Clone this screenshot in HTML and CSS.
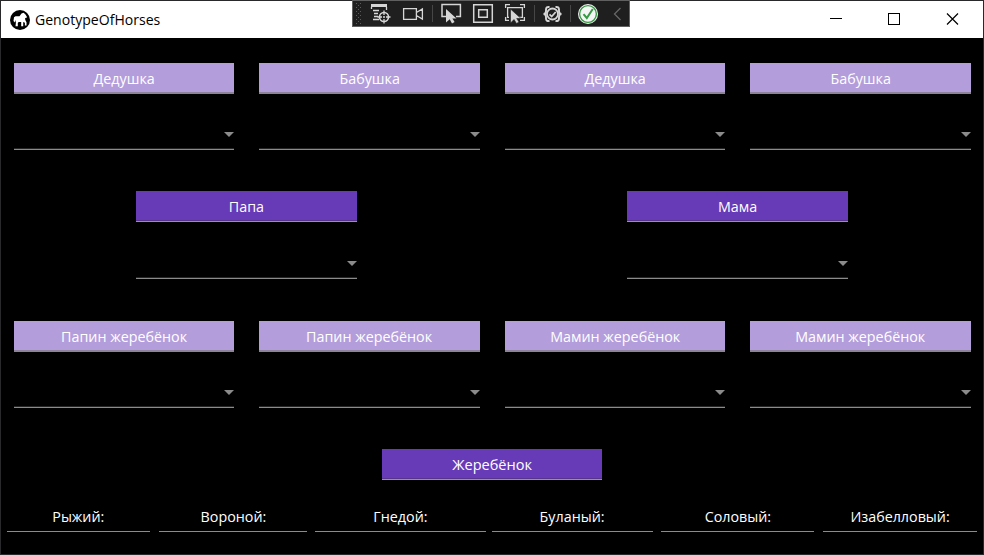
FILE: index.html
```html
<!DOCTYPE html>
<html lang="ru">
<head>
<meta charset="utf-8">
<title>GenotypeOfHorses</title>
<link rel="stylesheet" href="styles.css">
</head>
<body>
<div class="window">
  <header class="titlebar">
    <svg class="logo" width="20" height="20" viewBox="0 0 20 20"><circle cx="10" cy="10" r="10" fill="#000"/><path d="M3.500 11 L4 7.200 L5.500 6.200 H9.500 L11.500 3.600 L13.600 2.800 L15.500 4.500 L17 7 L16 8.200 L15 7.800 L15.300 10 L16.500 12.300 V15.500 H14.900 V12.800 L13.200 12 V16.300 H11.200 V12 H8.600 L7.800 13 V16.300 H5.500 L5.900 12.500 L5.200 10 L4.700 12.500 Z" fill="#fff"/></svg>
    <h1 class="title">GenotypeOfHorses</h1>
    <svg class="controls" width="138" height="37" viewBox="0 0 138 37" fill="none" stroke="#000" shape-rendering="crispEdges"><path d="M15 17.500H27M73.500 12.500H84.500V23.500H73.500Z"/><path d="M132 12.500L143 23.500M143 12.500L132 23.500" stroke-width="1.200" shape-rendering="auto"/></svg>
  </header>
  <main class="family">
    <div class="row four">
      <section class="person"><div class="name light"><span class="label">Дедушка</span></div><div class="select"><i class="arrow"></i></div></section>
      <section class="person"><div class="name light"><span class="label">Бабушка</span></div><div class="select"><i class="arrow"></i></div></section>
      <section class="person"><div class="name light"><span class="label">Дедушка</span></div><div class="select"><i class="arrow"></i></div></section>
      <section class="person"><div class="name light"><span class="label">Бабушка</span></div><div class="select"><i class="arrow"></i></div></section>
    </div>
    <div class="row two">
      <section class="person"><div class="name deep"><span class="label">Папа</span></div><div class="select"><i class="arrow"></i></div></section>
      <section class="person"><div class="name deep"><span class="label">Мама</span></div><div class="select"><i class="arrow"></i></div></section>
    </div>
    <div class="row four">
      <section class="person"><div class="name light"><span class="label">Папин жеребёнок</span></div><div class="select"><i class="arrow"></i></div></section>
      <section class="person"><div class="name light"><span class="label">Папин жеребёнок</span></div><div class="select"><i class="arrow"></i></div></section>
      <section class="person"><div class="name light"><span class="label">Мамин жеребёнок</span></div><div class="select"><i class="arrow"></i></div></section>
      <section class="person"><div class="name light"><span class="label">Мамин жеребёнок</span></div><div class="select"><i class="arrow"></i></div></section>
    </div>
    <div class="row one">
      <div class="name deep"><span class="label foal">Жеребёнок</span></div>
    </div>
  </main>
  <footer class="coats">
    <div class="coat"><span class="label">Рыжий:</span></div>
    <div class="coat"><span class="label">Вороной:</span></div>
    <div class="coat"><span class="label">Гнедой:</span></div>
    <div class="coat"><span class="label">Буланый:</span></div>
    <div class="coat"><span class="label">Соловый:</span></div>
    <div class="coat"><span class="label">Изабелловый:</span></div>
  </footer>
</div>
<div class="debugbar">
  <svg width="278" height="27" viewBox="352 0 278 27" fill="none" stroke="#d6d6d6" stroke-width="1.300">
    <defs><pattern id="grip" x="356" y="3" width="4" height="4" patternUnits="userSpaceOnUse"><path d="M0 0h1v1H0zM2 2h1v1H2z" fill="#5c5c5c" stroke="none"/></pattern></defs>
    <rect x="356" y="3" width="6" height="22" fill="url(#grip)" stroke="none"/>
    <path d="M371 5.500H387" stroke-width="3"/><path d="M371.500 7V9M386.500 7V10M373 10.500H379M374 13.500H378M374 16.500H378M373 19.500H379"/>
    <circle cx="384" cy="17" r="4.500" stroke-width="1.600"/><path d="M384 10.500V15M384 19V23.500M377.500 17H382M386 17H390.500"/><circle cx="384" cy="17" r="1" fill="#d6d6d6" stroke="none"/>
    <path d="M403.600 8.600H416.400V19.400H403.600ZM416.400 12.500L422.400 8.900V19.100L416.400 15.500"/>
    <path d="M432.500 5V22M534.500 5V22M570.500 5V22" stroke="#464646" stroke-width="1"/>
    <path d="M446 16.500H442V4.600H460.400V16.500H456" stroke-width="1.500"/>
    <path d="M446 9V22.500L449.700 19.200L452 23.500L454.600 22L452.400 18.500H456.500Z" fill="#d6d6d6" stroke="none"/>
    <path d="M473.700 4.700H492.300V22.300H473.700ZM478.700 9.700H487.300V17.300H478.700Z" stroke-width="1.500"/>
    <path d="M509 17.400H507.600V7.600H522.400V17.400H519M505.600 8V4.600H510M520 4.600H524.400V8M505.600 17V20.400H509M520 20.400H524.400V17"/>
    <path d="M510.500 9V23L514 19.500L516.500 23.500L519 22L516.700 18.500H521Z" fill="#d6d6d6" stroke="#1f1f1f" stroke-width=".6"/>
    <circle cx="552.500" cy="14" r="5.500" stroke-width="1.800"/><path d="M549.500 14.300L551.700 16.500L555.700 12" stroke-width="1.700"/><path d="M549.500 7Q546 6.500 546 9.500V11Q546 14 543.500 14Q546 14 546 17V18.500Q546 21.500 549.500 21M555.500 7Q559 6.500 559 9.500V11Q559 14 561.500 14Q559 14 559 17V18.500Q559 21.500 555.500 21" stroke-width="1.900"/>
    <circle cx="588" cy="14" r="10" fill="#f5f5f5" stroke="none"/><circle cx="588" cy="14" r="8.400" stroke="#369b43" stroke-width="1.400"/><path d="M583.500 14.200L586.800 18L592.800 9" stroke="#369b43" stroke-width="2"/>
    <path d="M620.500 8L614.500 14L620.500 20" stroke="#666"/>
  </svg>
</div>
</body>
</html>
```

FILE: styles.css
```css
* { box-sizing: border-box; }
body {
  margin: 0;
  background: #000;
  color: #fff;
  font: 15px/20px "Open Sans", "Noto Sans", sans-serif;
}
.window {
  width: 984px;
  height: 555px;
  border: 1px solid #29282b;
  overflow: hidden;
}
.titlebar {
  display: flex;
  align-items: center;
  height: 37px;
  padding-left: 9px;
  background: #fff;
  color: #000;
}
.title {
  margin: 0 auto 2px 5px;
  font-size: 15px;
  font-weight: 400;
  white-space: nowrap;
  transform: scaleX(.937);
  transform-origin: left;
}
.controls { margin-right: 30px; overflow: visible; }
.family { padding: 25px 12px 0 13px; }
.row { display: grid; column-gap: 25px; }
.four { grid-template-columns: 220px 221px 220px 221px; height: 128px; }
.two {
  grid-template-columns: 221px 221px;
  column-gap: 270px;
  height: 130px;
  padding-left: 122px;
}
.one { grid-template-columns: 220px; padding-left: 368px; }
.name {
  display: flex;
  justify-content: center;
  height: 31px;
  padding-top: 5px;
  white-space: nowrap;
}
.label {
  display: block;
  height: 20px;
  transform: scaleX(.953);
}
.foal { transform: scaleX(.97); }
.light { background: #b39ddb; border-bottom: 2px solid #8e8499; }
.deep {
  background: #673ab7;
  border-bottom: 1px solid #9a8fac;
  box-shadow: inset 0 -1px #57358f;
}
.select {
  display: flex;
  justify-content: flex-end;
  align-items: flex-start;
  height: 56px;
  padding-top: 38px;
  border-bottom: 1px solid #8b8b8b;
  box-shadow: inset 0 -1px #252525;
}
.two .select { height: 57px; padding-top: 39px; }
.arrow {
  width: 10px;
  height: 5px;
  background: #8b8b8b;
  clip-path: polygon(0 0, 100% 0, 50% 100%);
}
.coats {
  display: grid;
  grid-template-columns: 152px 156px 177px 169px 162px 154px;
  padding: 26px 6px 0;
}
.coat {
  display: flex;
  justify-content: center;
  height: 26px;
  margin-right: 9px;
  border-bottom: 1px solid #8b8b8b;
  white-space: nowrap;
}
.coat:nth-child(2), .coat:nth-child(4) { margin-right: 8px; }
.coat:nth-child(3) { margin-right: 6px; }
.coat:last-child { margin-right: 0; }
.debugbar {
  position: absolute;
  left: 352px;
  top: 0;
  width: 278px;
  height: 27px;
  background: #1f1f1f;
  box-shadow: inset 0 0 0 1px #606060;
}
.debugbar svg { display: block; }
```
